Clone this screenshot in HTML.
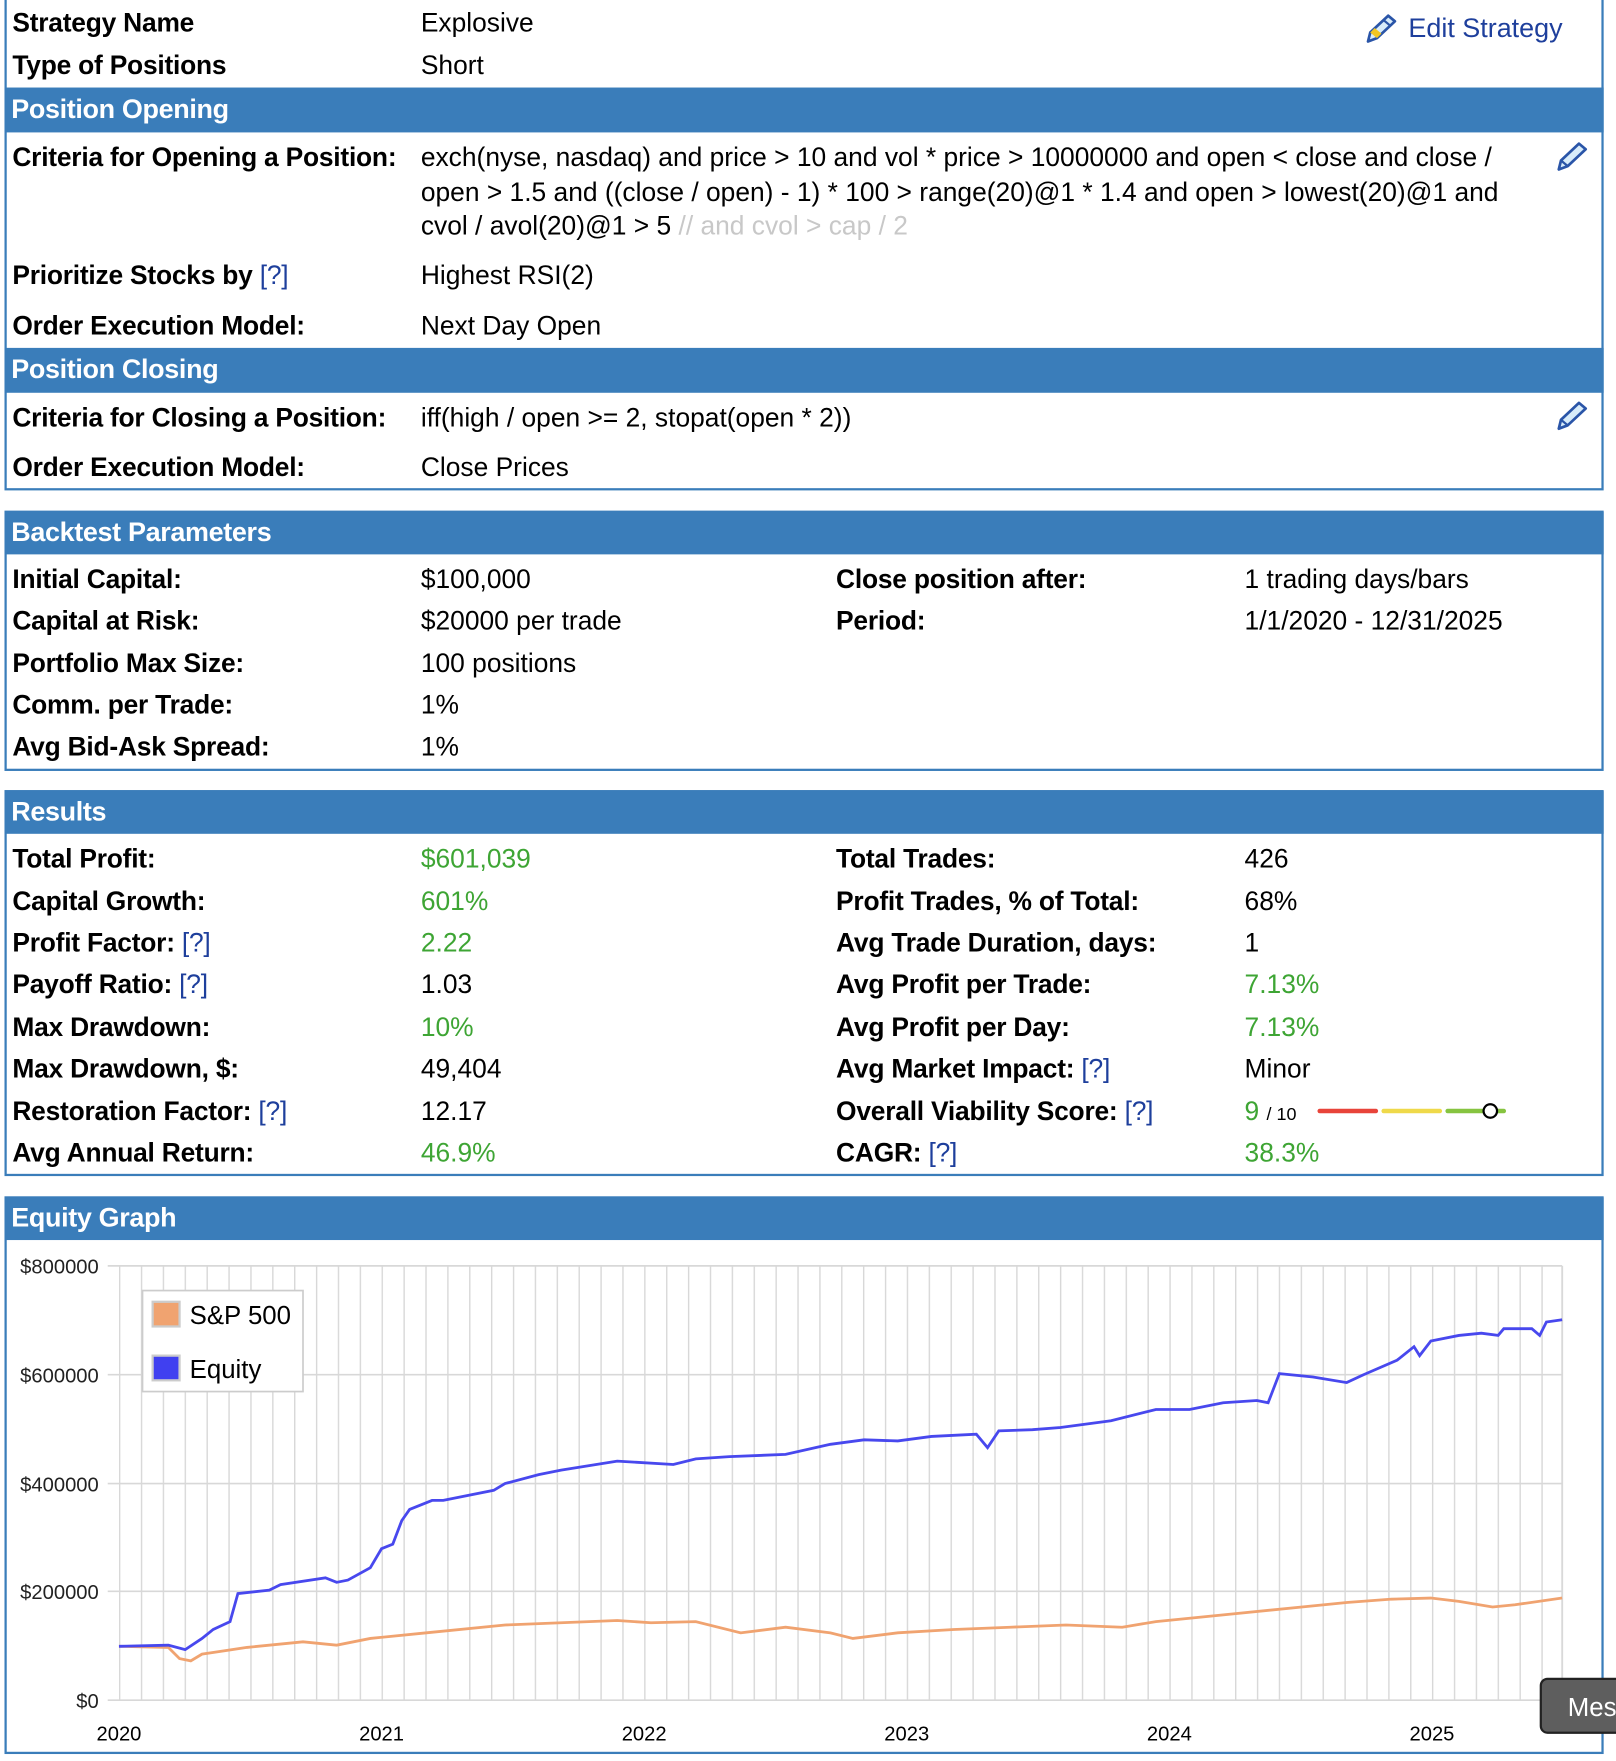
<!DOCTYPE html>
<html><head><meta charset="utf-8">
<style>
html,body{margin:0;padding:0;background:#fff;width:1616px;height:1760px;overflow:hidden}
#w{position:absolute;left:0;top:0;width:1440px;height:1569px;transform:scale(1.12222);transform-origin:0 0;font-family:"Liberation Sans",sans-serif;font-size:23.5px;color:#000}
.t{position:absolute;white-space:nowrap;line-height:30px}
.b{font-weight:bold;letter-spacing:-0.2px}
.g{color:#3ea534}
.q{color:#1e3f9c;font-weight:normal}
.box{position:absolute;left:4px;width:1425px;border:2px solid #3a7dba;box-sizing:border-box}
.hd{position:absolute;left:4px;width:1425px;height:40px;background:#3a7dba;color:#fff;font-weight:bold;font-size:24px;line-height:40px;padding-left:6px;box-sizing:border-box;letter-spacing:-0.3px}
</style></head><body><div id="w">
<div class="box" style="top:-4px;height:441px"></div>
<div class="box" style="top:456px;height:231px"></div>
<div class="box" style="top:705px;height:343px"></div>
<div class="box" style="top:1067px;height:496px"></div>
<div class="hd" style="top:78px">Position Opening</div>
<div class="hd" style="top:310px">Position Closing</div>
<div class="hd" style="top:455px;height:39px">Backtest Parameters</div>
<div class="hd" style="top:704px;height:39px">Results</div>
<div class="hd" style="top:1066px;height:39px">Equity Graph</div>

<div class="t b" style="left:11px;top:5px">Strategy Name</div><div class="t" style="left:375px;top:5px">Explosive</div>
<div class="t b" style="left:11px;top:43px">Type of Positions</div><div class="t" style="left:375px;top:43px">Short</div>
<svg style="position:absolute;left:1215px;top:10px" width="32" height="30" viewBox="0 0 32 30"><path d="M4 27 L6 19 L22 4 L28 9 L12 24 Z" fill="#d8ecfa" stroke="#2a55a8" stroke-width="2.4" stroke-linejoin="round"/><path d="M6 19 L12 24 L16 20 L10 15 Z" fill="#f3c623"/><path d="M18 8 L24 13" stroke="#2a55a8" stroke-width="2"/></svg>
<div class="t" style="left:1255px;top:11px;color:#1e3f9c;font-size:24px">Edit Strategy</div>

<div class="t b" style="left:11px;top:125px">Criteria for Opening a Position:</div>
<div class="t" style="left:375px;top:125px">exch(nyse, nasdaq) and price &gt; 10 and vol * price &gt; 10000000 and open &lt; close and close /</div>
<div class="t" style="left:375px;top:156px">open &gt; 1.5 and ((close / open) - 1) * 100 &gt; range(20)@1 * 1.4 and open &gt; lowest(20)@1 and</div>
<div class="t" style="left:375px;top:186px">cvol / avol(20)@1 &gt; 5 <span style="color:#c8c8c8">// and cvol &gt; cap / 2</span></div>
<svg style="position:absolute;left:1385px;top:124px" width="32" height="30" viewBox="0 0 32 30"><path d="M4 27 L6 19 L22 4 L28 9 L12 24 Z" fill="#d8ecfa" stroke="#2a55a8" stroke-width="2.4" stroke-linejoin="round"/><path d="M6 19 L12 24" stroke="#2a55a8" stroke-width="2"/></svg>
<div class="t b" style="left:11px;top:230px">Prioritize Stocks by <span class="q">[?]</span></div><div class="t" style="left:375px;top:230px">Highest RSI(2)</div>
<div class="t b" style="left:11px;top:275px">Order Execution Model:</div><div class="t" style="left:375px;top:275px">Next Day Open</div>
<div class="t b" style="left:11px;top:357px">Criteria for Closing a Position:</div><div class="t" style="left:375px;top:357px">iff(high / open &gt;= 2, stopat(open * 2))</div>
<svg style="position:absolute;left:1385px;top:355px" width="32" height="30" viewBox="0 0 32 30"><path d="M4 27 L6 19 L22 4 L28 9 L12 24 Z" fill="#d8ecfa" stroke="#2a55a8" stroke-width="2.4" stroke-linejoin="round"/><path d="M6 19 L12 24" stroke="#2a55a8" stroke-width="2"/></svg>
<div class="t b" style="left:11px;top:401px">Order Execution Model:</div><div class="t" style="left:375px;top:401px">Close Prices</div>

<div class="t b" style="left:11px;top:501px">Initial Capital:</div><div class="t" style="left:375px;top:501px">$100,000</div>
<div class="t b" style="left:745px;top:501px">Close position after:</div><div class="t" style="left:1109px;top:501px">1 trading days/bars</div>
<div class="t b" style="left:11px;top:538px">Capital at Risk:</div><div class="t" style="left:375px;top:538px">$20000 per trade</div>
<div class="t b" style="left:745px;top:538px">Period:</div><div class="t" style="left:1109px;top:538px">1/1/2020 - 12/31/2025</div>
<div class="t b" style="left:11px;top:576px">Portfolio Max Size:</div><div class="t" style="left:375px;top:576px">100 positions</div>
<div class="t b" style="left:11px;top:613px">Comm. per Trade:</div><div class="t" style="left:375px;top:613px">1%</div>
<div class="t b" style="left:11px;top:650px">Avg Bid-Ask Spread:</div><div class="t" style="left:375px;top:650px">1%</div>

<div class="t b" style="left:11px;top:750px">Total Profit:</div><div class="t g" style="left:375px;top:750px">$601,039</div>
<div class="t b" style="left:745px;top:750px">Total Trades:</div><div class="t" style="left:1109px;top:750px">426</div>
<div class="t b" style="left:11px;top:788px">Capital Growth:</div><div class="t g" style="left:375px;top:788px">601%</div>
<div class="t b" style="left:745px;top:788px">Profit Trades, % of Total:</div><div class="t" style="left:1109px;top:788px">68%</div>
<div class="t b" style="left:11px;top:825px">Profit Factor: <span class="q">[?]</span></div><div class="t g" style="left:375px;top:825px">2.22</div>
<div class="t b" style="left:745px;top:825px">Avg Trade Duration, days:</div><div class="t" style="left:1109px;top:825px">1</div>
<div class="t b" style="left:11px;top:862px">Payoff Ratio: <span class="q">[?]</span></div><div class="t" style="left:375px;top:862px">1.03</div>
<div class="t b" style="left:745px;top:862px">Avg Profit per Trade:</div><div class="t g" style="left:1109px;top:862px">7.13%</div>
<div class="t b" style="left:11px;top:900px">Max Drawdown:</div><div class="t g" style="left:375px;top:900px">10%</div>
<div class="t b" style="left:745px;top:900px">Avg Profit per Day:</div><div class="t g" style="left:1109px;top:900px">7.13%</div>
<div class="t b" style="left:11px;top:937px">Max Drawdown, $:</div><div class="t" style="left:375px;top:937px">49,404</div>
<div class="t b" style="left:745px;top:937px">Avg Market Impact: <span class="q">[?]</span></div><div class="t" style="left:1109px;top:937px">Minor</div>
<div class="t b" style="left:11px;top:975px">Restoration Factor: <span class="q">[?]</span></div><div class="t" style="left:375px;top:975px">12.17</div>
<div class="t b" style="left:745px;top:975px">Overall Viability Score: <span class="q">[?]</span></div>
<div class="t" style="left:1109px;top:975px"><span class="g">9</span> <span style="font-size:16px">/ 10</span></div>
<svg style="position:absolute;left:1170px;top:980px" width="180" height="20"><g stroke-width="4" stroke-linecap="round"><line x1="6" y1="10" x2="56" y2="10" stroke="#e8443a"/><line x1="63" y1="10" x2="113" y2="10" stroke="#efd94a"/><line x1="120" y1="10" x2="170" y2="10" stroke="#86c440"/></g><circle cx="158" cy="10" r="6" fill="#fff" stroke="#000" stroke-width="2"/></svg>
<div class="t b" style="left:11px;top:1012px">Avg Annual Return:</div><div class="t g" style="left:375px;top:1012px">46.9%</div>
<div class="t b" style="left:745px;top:1012px">CAGR: <span class="q">[?]</span></div><div class="t g" style="left:1109px;top:1012px">38.3%</div>

<svg style="position:absolute;left:0;top:0" width="1440" height="1569">
<defs><pattern id="vg" x="106" y="0" width="19.5" height="10" patternUnits="userSpaceOnUse"><line x1="0.5" y1="0" x2="0.5" y2="10" stroke="#d8d8d8" stroke-width="1.5"/></pattern></defs>
<rect x="106" y="1128" width="1287" height="387" fill="url(#vg)"/>
<line x1="1392" y1="1128" x2="1392" y2="1515" stroke="#d8d8d8" stroke-width="1.5"/>
<g stroke="#d8d8d8" stroke-width="1.5"><line x1="96" y1="1128" x2="1392" y2="1128"/><line x1="96" y1="1225" x2="1392" y2="1225"/><line x1="96" y1="1322" x2="1392" y2="1322"/><line x1="96" y1="1418" x2="1392" y2="1418"/><line x1="96" y1="1515" x2="1392" y2="1515"/></g>
<g font-family="Liberation Sans,sans-serif" font-size="18" fill="#222" text-anchor="end"><text x="88" y="1135">$800000</text><text x="88" y="1232">$600000</text><text x="88" y="1329">$400000</text><text x="88" y="1425">$200000</text><text x="88" y="1522">$0</text></g>
<g font-family="Liberation Sans,sans-serif" font-size="18" fill="#000" text-anchor="middle"><text x="106" y="1551">2020</text><text x="340" y="1551">2021</text><text x="574" y="1551">2022</text><text x="808" y="1551">2023</text><text x="1042" y="1551">2024</text><text x="1276" y="1551">2025</text></g>
<polyline fill="none" stroke="#f0a370" stroke-width="2.5" points="106,1467 150,1468 160,1478 170,1480 180,1474 220,1468 270,1463 300,1466 330,1460 380,1455 450,1448 550,1444 580,1446 620,1445 660,1455 700,1450 740,1455 760,1460 800,1455 850,1452 900,1450 950,1448 1000,1450 1030,1445 1100,1438 1160,1432 1200,1428 1240,1425 1275,1424 1300,1427 1330,1432 1350,1430 1392,1424"/>
<polyline fill="none" stroke="#4848ee" stroke-width="2.5" points="106,1467 150,1466 165,1470 180,1460 190,1452 205,1445 212,1420 240,1417 250,1412 290,1406 300,1410 310,1408 330,1397 340,1380 350,1376 358,1355 365,1345 385,1337 395,1337 440,1328 450,1322 480,1314 500,1310 550,1302 600,1305 620,1300 650,1298 700,1296 740,1287 770,1283 800,1284 830,1280 870,1278 880,1290 890,1275 920,1274 945,1272 990,1266 1030,1256 1060,1256 1090,1250 1120,1248 1130,1250 1140,1224 1170,1227 1200,1232 1215,1225 1245,1212 1260,1200 1265,1208 1275,1195 1300,1190 1320,1188 1335,1190 1340,1184 1365,1184 1372,1190 1378,1178 1392,1176"/>
<rect x="127" y="1150" width="143" height="90" fill="#fff" stroke="#ccc" stroke-width="1.5"/>
<rect x="136" y="1160" width="24" height="22" fill="#f0a370" stroke="#ccc" stroke-width="2"/>
<rect x="136" y="1208" width="24" height="22" fill="#4040f0" stroke="#ccc" stroke-width="2"/>
<text x="169" y="1180" font-family="Liberation Sans,sans-serif" font-size="23" fill="#000">S&amp;P 500</text>
<text x="169" y="1228" font-family="Liberation Sans,sans-serif" font-size="23" fill="#000">Equity</text>
<rect x="1373" y="1496" width="80" height="48" rx="6" fill="#5e5e5e" stroke="#222" stroke-width="2"/>
<text x="1397" y="1529" font-family="Liberation Sans,sans-serif" font-size="23" fill="#fff">Mes</text>
</svg>
</div></body></html>
